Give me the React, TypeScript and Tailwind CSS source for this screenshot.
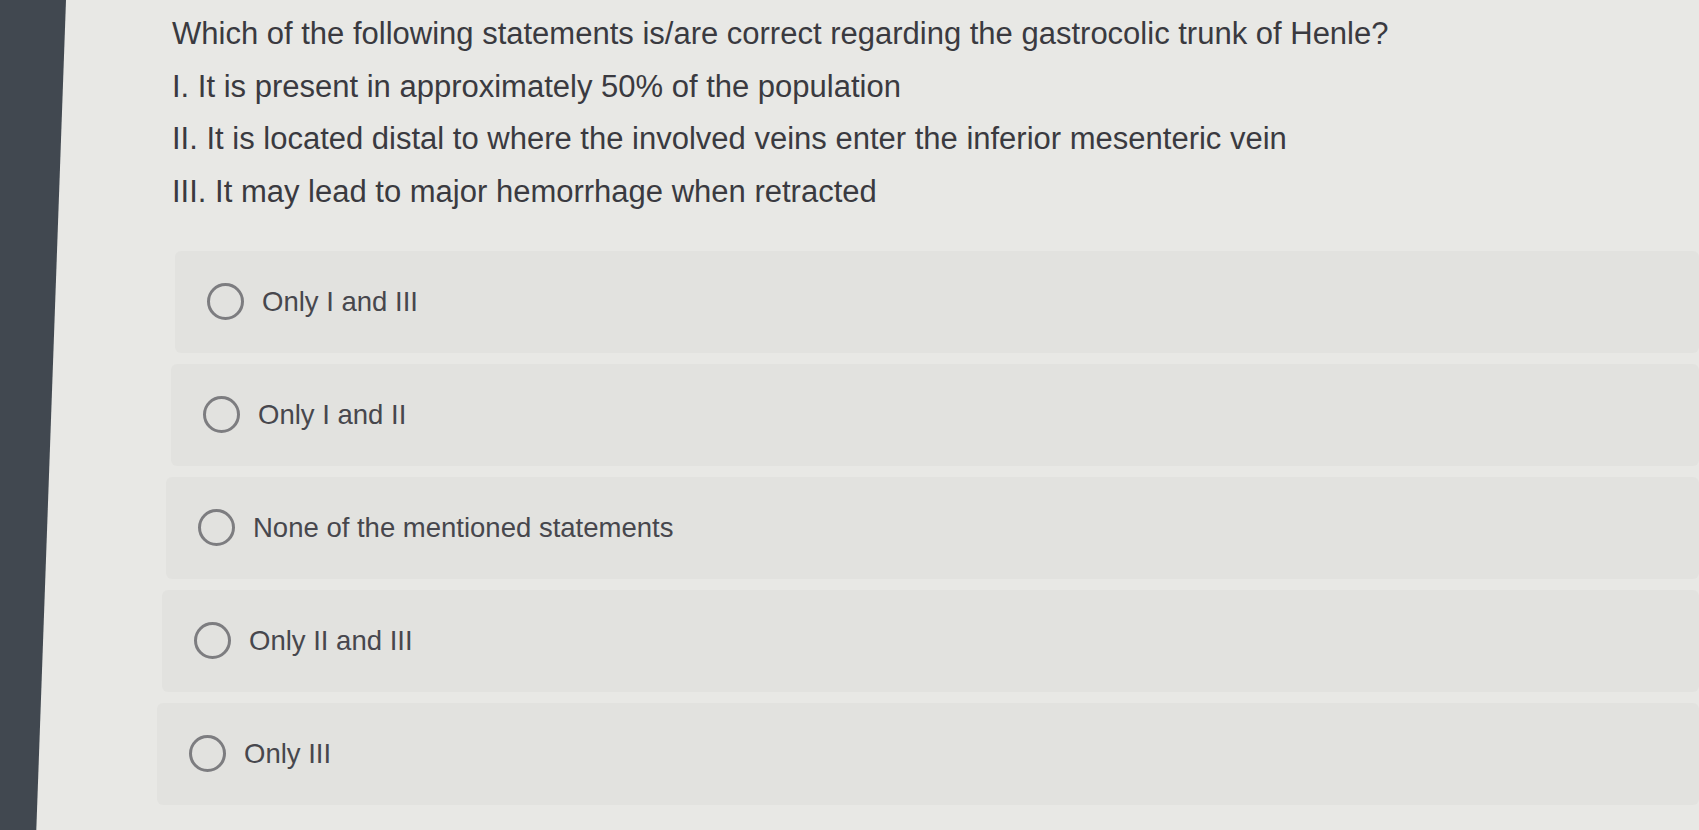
import React from "react";

const STATEMENTS = [
  "Which of the following statements is/are correct regarding the gastrocolic trunk of Henle?",
  "I. It is present in approximately 50% of the population",
  "II. It is located distal to where the involved veins enter the inferior mesenteric vein",
  "III. It may lead to major hemorrhage when retracted",
];

// the photo is a little skewed, so each row sits a few px further left
const OPTIONS = [
  { label: "Only I and III", shift: "ml-[18px]" },
  { label: "Only I and II", shift: "ml-[14px]" },
  { label: "None of the mentioned statements", shift: "ml-[9px]" },
  { label: "Only II and III", shift: "ml-[5px]" },
  { label: "Only III", shift: "ml-0" },
];

function Radio() {
  return (
    <span className="w-[37px] h-[37px] shrink-0 rounded-full border-[3px] border-[#7d7d80] bg-transparent" />
  );
}

export default function App() {
  return (
    <div className="flex h-[830px] w-full overflow-hidden bg-[#e8e8e5] font-['Liberation_Sans',Arial,sans-serif]">
      {/* dark strip on the left */}
      <div className="w-[66px] shrink-0 bg-[#414850] [clip-path:polygon(0_0,100%_0,55%_100%,0_100%)]" />

      <main className="flex-1 min-w-0">
        <div className="pl-[106px] pt-[8px] text-[31px] leading-[52.7px] text-[#3a3a40] whitespace-nowrap">
          {STATEMENTS.map((s) => (
            <p key={s}>{s}</p>
          ))}
        </div>

        <div className="mt-[32px] pl-[91px] flex flex-col gap-[11px]">
          {OPTIONS.map((o) => (
            <div
              key={o.label}
              className={`${o.shift} h-[102px] rounded-md bg-[#e2e2df] flex items-center gap-[18px] pl-[32px]`}
            >
              <Radio />
              <span className="text-[27.5px] text-[#47474d] whitespace-nowrap">{o.label}</span>
            </div>
          ))}
        </div>
      </main>
    </div>
  );
}
